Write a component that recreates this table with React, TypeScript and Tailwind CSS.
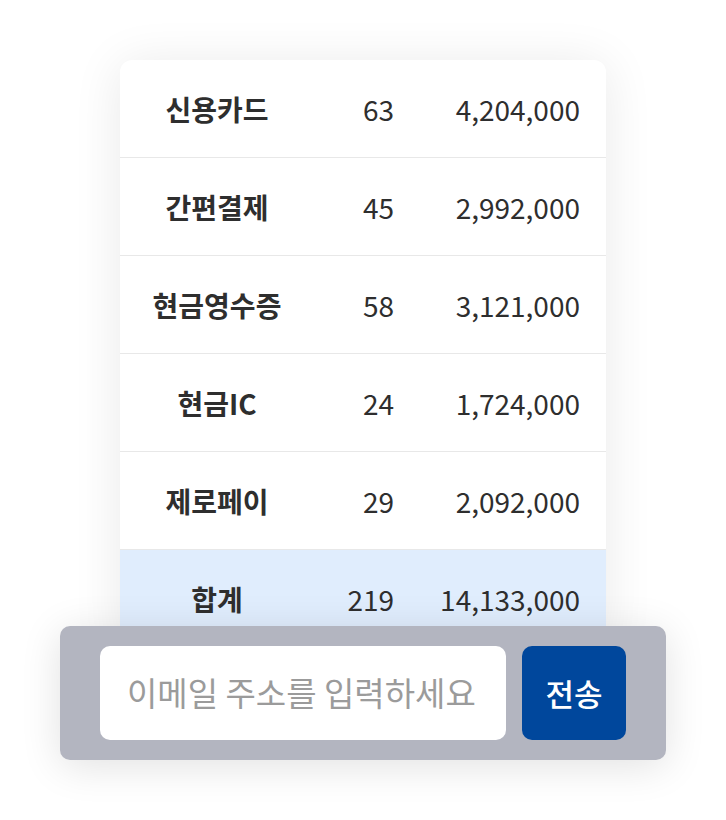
const rows = [
  { label: "신용카드", count: "63", amount: "4,204,000" },
  { label: "간편결제", count: "45", amount: "2,992,000" },
  { label: "현금영수증", count: "58", amount: "3,121,000" },
  { label: "현금IC", count: "24", amount: "1,724,000" },
  { label: "제로페이", count: "29", amount: "2,092,000" },
];

const font = { fontFamily: '"Noto Sans CJK KR", "Noto Sans", sans-serif' };

function Row({ label, count, amount, total }: { label: string; count: string; amount: string; total?: boolean }) {
  return (
    <div
      className={
        "grid grid-cols-[194px_80px_1fr] items-center h-[98px] pr-[26px] text-[28px] text-[#2e2e2e] " +
        (total ? "bg-[#e0edfd]" : "border-b border-[#e8e8e8]")
      }
    >
      <span className="text-center font-bold">{label}</span>
      <span className="text-right">{count}</span>
      <span className="text-right">{amount}</span>
    </div>
  );
}

export default function App() {
  return (
    <div className="w-[726px] h-[820px] bg-white pt-[60px]" style={font}>
      <div className="mx-auto w-[486px] bg-white rounded-t-[12px] overflow-hidden shadow-[0_4px_50px_rgba(0,0,0,0.09)]">
        {rows.map((r) => (
          <Row key={r.label} {...r} />
        ))}
        <Row label="합계" count="219" amount="14,133,000" total />
      </div>

      <div className="relative z-10 -mt-[22px] mx-auto w-[606px] h-[134px] rounded-[10px] bg-[#b3b5c0] px-[40px] py-[20px] flex gap-[16px] shadow-[0_6px_40px_rgba(0,0,0,0.12)]">
        <div className="w-[406px] h-[94px] bg-white rounded-[10px] flex items-center pl-[27px]">
          <span className="text-[33px] text-[#9b9b9b] whitespace-nowrap">이메일 주소를 입력하세요</span>
        </div>
        <button className="w-[104px] h-[94px] bg-[#00479c] rounded-[10px] text-white text-[31px] font-medium flex items-center justify-center">
          전송
        </button>
      </div>
    </div>
  );
}
